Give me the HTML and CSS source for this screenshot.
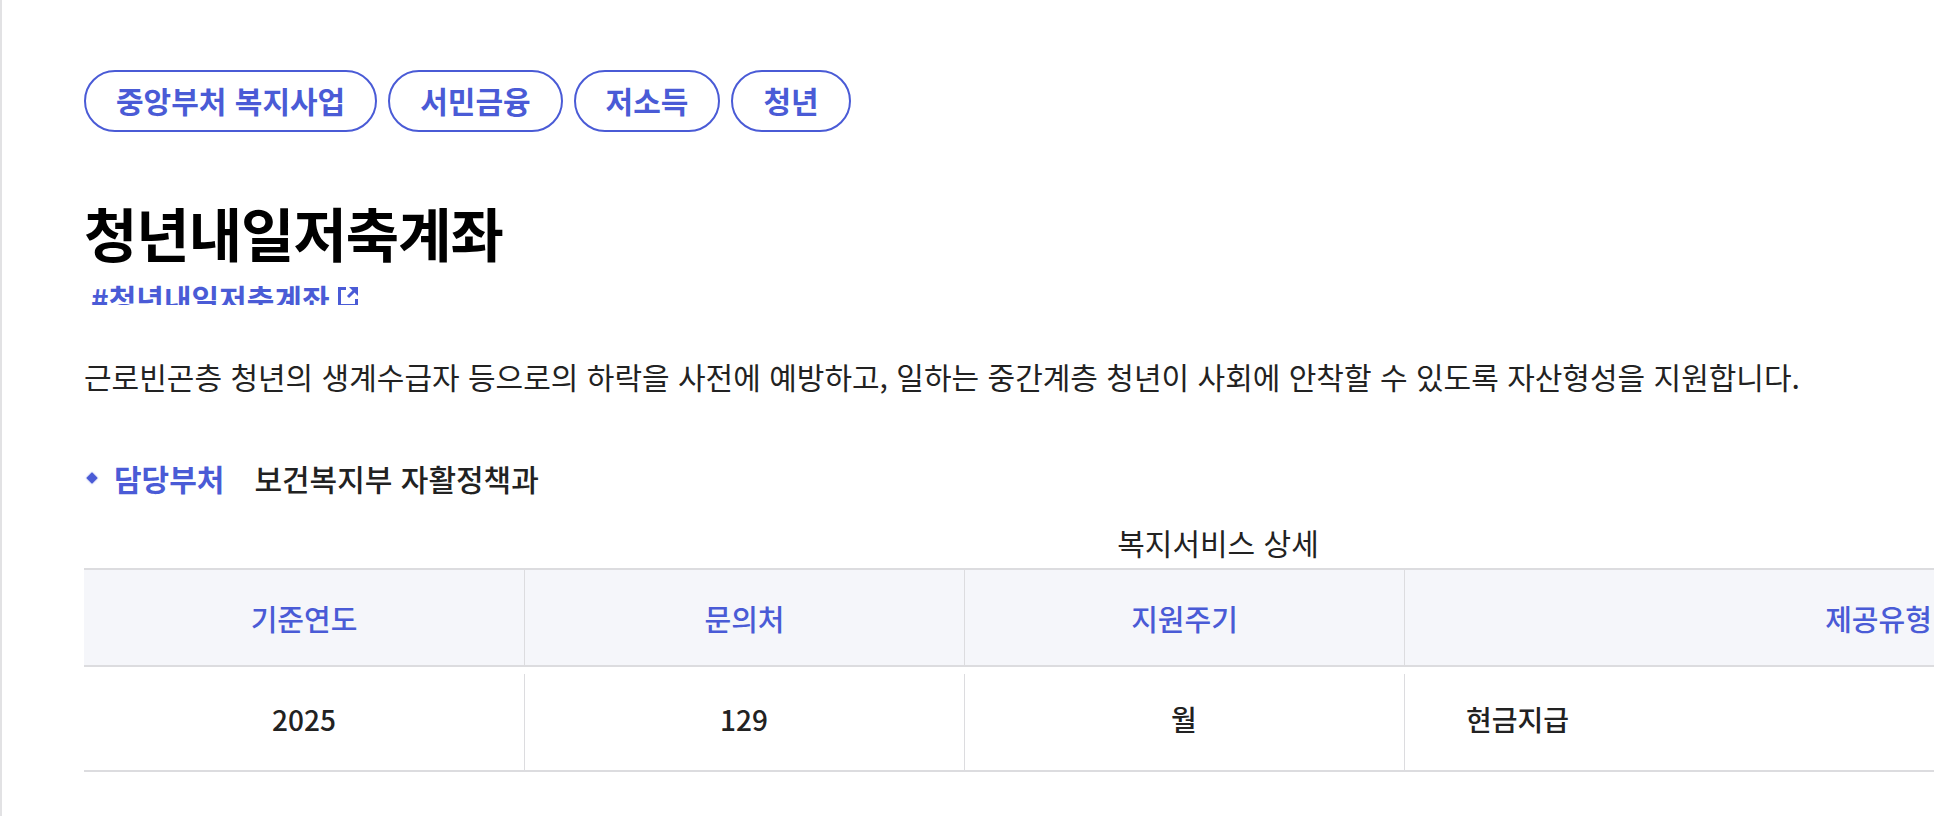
FILE: index.html
```html
<!DOCTYPE html>
<html lang="ko">
<head>
<meta charset="utf-8">
<title>청년내일저축계좌</title>
<link rel="stylesheet" href="styles.css">
</head>
<body>
<div class="page">
  <ul class="tags">
    <li class="tag">중앙부처 복지사업</li>
    <li class="tag">서민금융</li>
    <li class="tag">저소득</li>
    <li class="tag">청년</li>
  </ul>
  <h1 class="title">청년내일저축계좌</h1>
  <div class="hash-wrap">
    <a class="hash" href="#">#청년내일저축계좌<svg class="ext" viewBox="0 0 24 24" width="24" height="24"><path d="M10 3.5H3.5v17h17V14" fill="none" stroke="currentColor" stroke-width="3"/><path d="M13 2h9v9z" fill="currentColor"/><path d="M20 4l-8 8" stroke="currentColor" stroke-width="3"/></svg></a>
  </div>
  <p class="desc">근로빈곤층 청년의 생계수급자 등으로의 하락을 사전에 예방하고, 일하는 중간계층 청년이 사회에 안착할 수 있도록 자산형성을 지원합니다.</p>
  <div class="dept">
    <span class="bullet"></span>
    <span class="dept-label">담당부처</span>
    <span class="dept-value">보건복지부 자활정책과</span>
  </div>
  <table class="detail">
    <caption>복지서비스 상세</caption>
    <colgroup>
      <col class="c1"><col class="c2"><col class="c3"><col class="c4">
    </colgroup>
    <thead>
      <tr><th>기준연도</th><th>문의처</th><th>지원주기</th><th>제공유형</th></tr>
    </thead>
    <tbody>
      <tr><td>2025</td><td>129</td><td>월</td><td class="left">현금지급</td></tr>
    </tbody>
  </table>
</div>
</body>
</html>
```

FILE: styles.css
```css
html, body {
  margin: 0;
  padding: 0;
  overflow: hidden;
  background: #fff;
}
body {
  font-family: "Noto Sans CJK KR", "Noto Sans", sans-serif;
  color: #222;
}
.page {
  border-left: 2px solid #e2e2e4;
  min-height: 816px;
  box-sizing: border-box;
  padding: 70px 0 0 82px;
}
.tags {
  list-style: none;
  margin: 0;
  padding: 0;
  display: flex;
  gap: 11px;
}
.tag {
  height: 62px;
  box-sizing: border-box;
  border: 2px solid #4a5bd6;
  border-radius: 31px;
  padding: 0 30px;
  font-size: 30px;
  line-height: 56px;
  font-weight: 700;
  color: #4a5bd6;
  white-space: nowrap;
}
.title {
  margin: 66px 0 0;
  font-size: 58px;
  line-height: 68px;
  font-weight: 700;
  color: #000;
  letter-spacing: -1px;
}
.hash-wrap {
  margin-top: 17px;
  height: 22px;
  overflow: hidden;
  padding-left: 7px;
}
.hash {
  display: inline-flex;
  align-items: flex-start;
  gap: 6px;
  font-size: 30px;
  line-height: 30px;
  font-weight: 700;
  color: #4a5bd6;
  text-decoration: none;
}
.ext {
  margin-top: 2px;
}
.desc {
  margin: 51px 0 0;
  font-size: 30px;
  line-height: 40px;
  color: #222;
}
.dept {
  margin-top: 62px;
  display: flex;
  align-items: center;
  height: 40px;
  font-size: 30px;
}
.bullet {
  width: 8px;
  height: 8px;
  background: #4a5bd6;
  transform: rotate(45deg);
  margin: 0 18px 0 4px;
  box-shadow: 0 0 2px #8f9be6;
}
.dept-label {
  color: #4a5bd6;
  font-weight: 700;
  margin-right: 30px;
}
.dept-value {
  font-weight: 500;
  color: #222;
}
.detail {
  margin-top: 24px;
  width: 2268px;
  table-layout: fixed;
  border-collapse: separate;
  border-spacing: 0;
  border-top: 2px solid #dcdcdf;
}
.detail caption {
  font-size: 30px;
  line-height: 40px;
  padding-bottom: 6px;
  color: #222;
}
.c1, .c2, .c3 { width: 440px; }
.c4 { width: 948px; }
.detail th {
  height: 95px;
  padding: 0;
  background: #f5f6fa;
  border-bottom: 2px solid #dcdcdf;
  font-size: 29px;
  font-weight: 500;
  color: #4a5bd6;
}
.detail th + th {
  border-left: 1px solid #dcdcdf;
}
.detail td {
  height: 103px;
  padding: 0;
  text-align: center;
  border-bottom: 2px solid #dcdcdf;
  font-size: 28px;
  font-weight: 500;
  color: #222;
}
.detail td + td {
  background: linear-gradient(#dcdcdf, #dcdcdf) left 7px / 1px calc(100% - 7px) no-repeat;
}
.detail td.left {
  text-align: left;
  padding-left: 62px;
}
```
